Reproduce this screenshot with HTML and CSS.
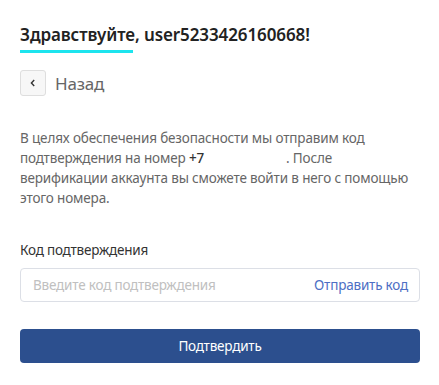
FILE: index.html
```html
<!DOCTYPE html>
<html lang="ru">
<head>
    <meta charset="UTF-8">
    <meta name="viewport" content="width=device-width, initial-scale=1.0">
    <title>Подтверждение номера</title>
    <link rel="stylesheet" href="styles.css">
</head>
<body>
    <div class="verify-box">
        <h1 class="greeting">Здравствуйте, user5233426160668!</h1>
        <div class="greeting-line"></div>

        <div class="back-row">
            <button class="back-btn">
                <svg width="10" height="10" viewBox="0 0 10 10"><path d="M6.2 2 L3.4 5 L6.2 8" fill="none" stroke="#333" stroke-width="1.4"/></svg>
            </button>
            <span class="back-text">Назад</span>
        </div>

        <p class="info">В целях обеспечения безопасности мы отправим код подтверждения на номер <b class="phone">+7</b><i class="mask"></i>. После верификации аккаунта вы сможете войти в него с помощью этого номера.</p>

        <label class="field-label" for="code">Код подтверждения</label>
        <div class="code-field">
            <input id="code" type="text" placeholder="Введите код подтверждения">
            <a href="#" class="send-link">Отправить код</a>
        </div>

        <button class="submit-btn">Подтвердить</button>
    </div>
</body>
</html>
```

FILE: styles.css
```css
body {
    margin: 0;
    padding: 0;
    background: #fff;
    font-family: 'Noto Sans', 'Open Sans', Arial, sans-serif;
    color: #333;
}
.verify-box {
    width: 400px;
    padding: 21px 20px 0;
}
.greeting {
    margin: 0;
    font-size: 17px;
    font-weight: 600;
    line-height: 28px;
    letter-spacing: -0.1px;
    color: #222;
}
.greeting-line {
    width: 113px;
    height: 3px;
    margin-top: 1px;
    background: #1de4ee;
}
.back-row {
    display: flex;
    align-items: center;
    margin-top: 17px;
}
.back-btn {
    width: 26px;
    height: 26px;
    padding: 0;
    display: flex;
    align-items: center;
    justify-content: center;
    background: #f7f7f7;
    border: 1px solid #dedede;
    border-radius: 3px;
    cursor: pointer;
}
.back-text {
    margin-left: 9px;
    font-size: 17px;
    letter-spacing: -0.2px;
    color: #666;
}
.info {
    margin: 32px 0 0;
    padding-right: 6px;
    font-size: 13.5px;
    line-height: 20px;
    letter-spacing: -0.15px;
    color: #666;
}
.phone {
    color: #333;
    font-weight: 500;
}
.mask {
    display: inline-block;
    width: 82px;
}
.field-label {
    display: block;
    margin-top: 32px;
    font-size: 13.5px;
    line-height: 20px;
    letter-spacing: -0.2px;
    color: #333;
}
.code-field {
    display: flex;
    align-items: center;
    height: 32px;
    margin-top: 8px;
    border: 1px solid #dcdfe6;
    border-radius: 4px;
    padding: 0 11px 0 12px;
}
.code-field input {
    flex: 1;
    border: none;
    outline: none;
    padding: 0;
    font-size: 13.5px;
    letter-spacing: -0.2px;
    font-family: inherit;
    color: #333;
}
.code-field input::placeholder {
    color: #c0c0c0;
}
.send-link {
    font-size: 13.5px;
    letter-spacing: -0.2px;
    color: #4d6ec4;
    text-decoration: none;
}
.submit-btn {
    display: block;
    width: 100%;
    height: 34px;
    margin-top: 27px;
    background: #2c4f8e;
    color: #fff;
    border: none;
    border-radius: 4px;
    font-size: 13.5px;
    letter-spacing: -0.2px;
    font-family: inherit;
    cursor: pointer;
}
```
